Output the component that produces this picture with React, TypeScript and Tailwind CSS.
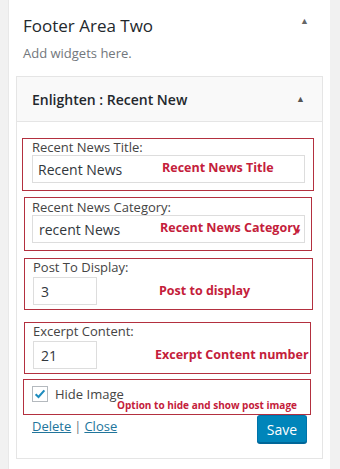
import React from 'react';

const red = 'text-[#c4203a]';

const Note: React.FC<{ left: number; top: number; small?: boolean; children: React.ReactNode }> = ({
  left,
  top,
  small,
  children,
}) => (
  <span
    className={`absolute whitespace-nowrap font-bold ${red} ${small ? 'text-[10px]' : 'text-[12.5px]'} leading-none`}
    style={{ left, top }}
  >
    {children}
  </span>
);

export default function App() {
  return (
    <div className="w-[340px] h-[469px] bg-[#f1f1f1] flex overflow-hidden [font-family:'Open_Sans',sans-serif]">
      <div className="ml-[8px] w-[322px] h-full bg-white border-l border-[#e8e8e8] flex flex-col">
        <div className="flex items-start justify-between pl-[14px] pr-[21px] pt-[14px]">
          <h2 className="text-[17px] leading-[24px] text-[#23282d]">Footer Area Two</h2>
          <span className="text-[9px] text-[#666]">▲</span>
        </div>
        <p className="pl-[14px] mt-[6px] text-[13px] leading-[18px] text-[#72777c]">Add widgets here.</p>

        <div className="ml-[7px] mt-[14px] w-[307px] border border-[#e5e5e5] bg-white">
          <div className="h-[45px] bg-[#f9f9f9] border-b border-[#e5e5e5] flex items-center justify-between pl-[15px] pr-[17px]">
            <span className="text-[14px] font-semibold text-[#23282d]">Enlighten : Recent New</span>
            <span className="text-[9px] text-[#555]">▲</span>
          </div>

          <div className="flex flex-col pb-[15px]">
            {/* Title */}
            <div className="relative ml-[5px] mt-[16px] w-[292px] h-[53px] border border-[#b3303f] pl-[9px] pr-[8px]">
              <div className="text-[13px] leading-[16px] text-[#444]">Recent News Title:</div>
              <div className="h-[28px] border border-[#ddd] bg-white px-[5px] flex items-center text-[14px] text-[#32373c]">
                Recent News
              </div>
              <Note left={139} top={23}>Recent News Title</Note>
            </div>

            {/* Category */}
            <div className="relative ml-[7px] mt-[6px] w-[288px] h-[54px] border border-[#b3303f] pl-[7px] pr-[6px]">
              <div className="text-[13px] leading-[16px] text-[#444] mt-[1px]">Recent News Category:</div>
              <div className="h-[28px] border border-[#ddd] bg-white px-[6px] flex items-center text-[14px] text-[#32373c]">
                recent News
              </div>
              <Note left={135} top={24}>Recent News Category</Note>
              <span className="absolute left-[269px] top-[29px] text-[8px] leading-none text-[#c4203a]">▼</span>
            </div>

            {/* Post to display */}
            <div className="relative ml-[7px] mt-[7px] w-[289px] h-[52px] border border-[#b3303f] pl-[8px]">
              <div className="text-[13px] leading-[16px] text-[#444]">Post To Display:</div>
              <div className="mt-[2px] w-[64px] h-[28px] border border-[#ddd] bg-white px-[7px] flex items-center text-[14px] text-[#32373c]">
                3
              </div>
              <Note left={134} top={26}>Post to display</Note>
            </div>

            {/* Excerpt */}
            <div className="relative ml-[7px] mt-[12px] w-[287px] h-[52px] border border-[#b3303f] pl-[8px]">
              <div className="text-[13px] leading-[16px] text-[#444]">Excerpt Content:</div>
              <div className="mt-[2px] w-[64px] h-[28px] border border-[#ddd] bg-white px-[7px] flex items-center text-[14px] text-[#32373c]">
                21
              </div>
              <Note left={130} top={26}>Excerpt Content number</Note>
            </div>

            {/* Hide image */}
            <div className="relative ml-[6px] mt-[5px] w-[288px] h-[36px] border border-[#b3303f] pl-[8px] pt-[6px]">
              <div className="flex items-center gap-[7px]">
                <span className="w-[16px] h-[16px] border border-[#b4b9be] bg-white flex items-center justify-center">
                  <svg viewBox="0 0 16 16" className="w-[14px] h-[14px]">
                    <path d="M3 8.2 L6.3 11.4 L13 3.8" fill="none" stroke="#1e8cbe" strokeWidth="2.4" />
                  </svg>
                </span>
                <span className="text-[13px] leading-[16px] text-[#444]">Hide Image</span>
              </div>
              <Note left={93} top={20} small>Option to hide and show post image</Note>
            </div>

            {/* Footer */}
            <div className="flex items-start justify-between pl-[15px] pr-[15px]">
              <div className="mt-[3px] text-[13px] leading-[16px] text-[#72777c]">
                <a className="underline text-[#21759b]">Delete</a>
                <span className="mx-[3px]">|</span>
                <a className="underline text-[#21759b]">Close</a>
              </div>
              <button className="w-[50px] h-[28px] rounded-[3px] bg-[#0085ba] border border-[#0073aa] border-b-[#006799] text-white text-[14px] shadow-[0_1px_0_#006799]">
                Save
              </button>
            </div>
          </div>
        </div>
      </div>
    </div>
  );
}
